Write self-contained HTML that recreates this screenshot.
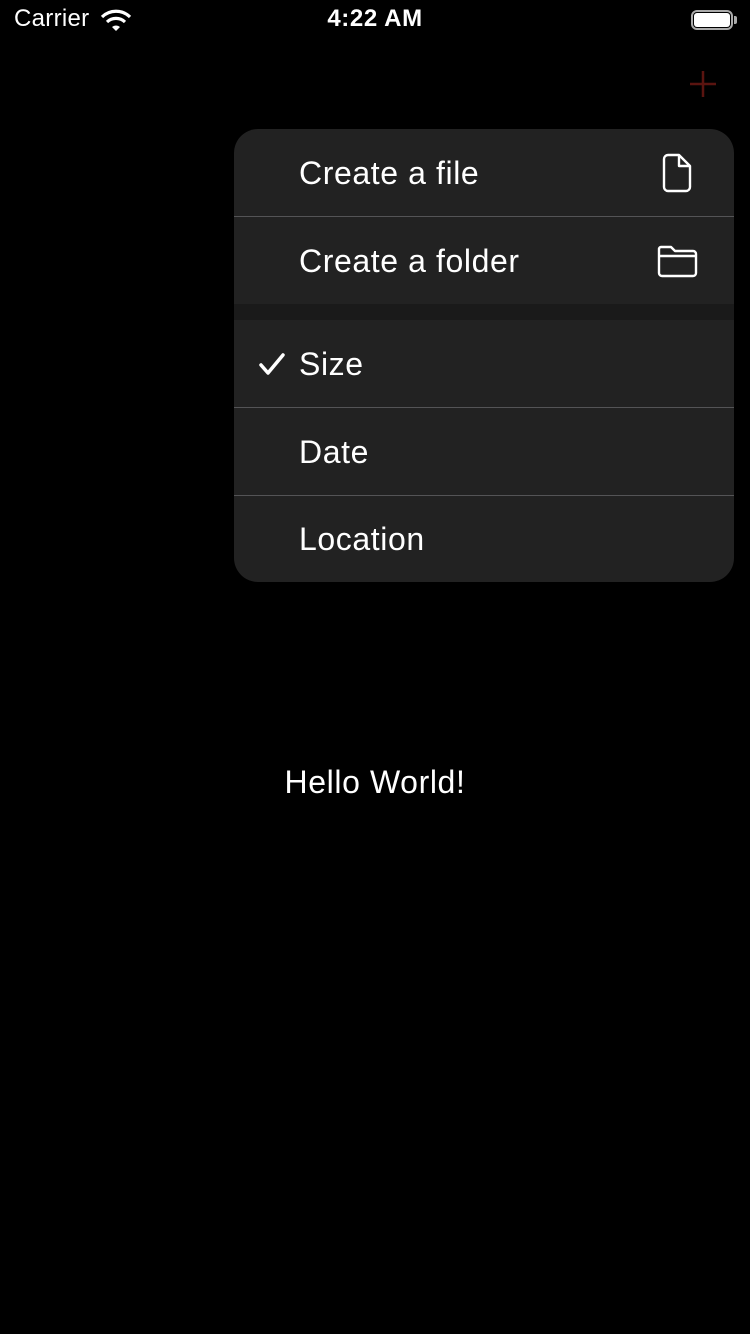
<!DOCTYPE html>
<html><head><style>
body{margin:0;width:750px;height:1334px;background:#000;position:relative;overflow:hidden;font-family:"Liberation Sans",sans-serif;color:#fff}
.abs{position:absolute}
.menu{left:234px;top:129px;width:500px;height:453px;border-radius:24px;overflow:hidden;background:#222}
.row{position:absolute;left:65px;width:430px;height:87px;font-size:32px;line-height:89px;letter-spacing:0.6px}
.sep{position:absolute;left:0;width:500px;height:1px;background:#545456}
</style></head><body>
<div class="abs" style="left:14px;top:5px;font-size:24px;letter-spacing:0.3px">Carrier</div>
<svg class="abs" style="left:100px;top:9px" width="32" height="24" viewBox="0 0 32 24"><path d="M2 8 A20 20 0 0 1 30 8" stroke="#fff" stroke-width="3.2" fill="none"/><path d="M7 13 A13 13 0 0 1 25 13" stroke="#fff" stroke-width="3.2" fill="none"/><path d="M12 18 L16 22 L20 18 A6 6 0 0 0 12 18Z" fill="#fff"/></svg>
<div class="abs" style="left:0;width:750px;top:5px;text-align:center;font-size:24px;font-weight:bold;letter-spacing:0.6px">4:22 AM</div>
<div class="abs" style="left:691px;top:10px;width:42px;height:20px;border:2px solid #aaa;border-radius:6px;box-sizing:border-box"></div>
<div class="abs" style="left:694px;top:13px;width:36px;height:14px;background:#fff;border-radius:3px"></div>
<div class="abs" style="left:734px;top:16px;width:3px;height:8px;background:#aaa;border-radius:0 2px 2px 0"></div>
<svg class="abs" style="left:688px;top:69px" width="30" height="30"><path d="M15 2V28M2 15H28" stroke="#5a1410" stroke-width="2.5"/></svg>
<div class="abs menu">
<div class="row" style="top:0">Create a file</div>
<div class="sep" style="top:87px"></div>
<div class="row" style="top:88px">Create a folder</div>
<div class="abs" style="left:0;top:175px;width:500px;height:16px;background:#1a1a1a"></div>
<div class="row" style="top:191px">Size</div>
<div class="sep" style="top:278px"></div>
<div class="row" style="top:279px">Date</div>
<div class="sep" style="top:366px"></div>
<div class="row" style="top:366px">Location</div>
<svg class="abs" style="left:24px;top:223px" width="28" height="26"><path d="M3 13L10 21L25 3" stroke="#fff" stroke-width="3.5" fill="none" stroke-linecap="round" stroke-linejoin="round"/></svg>
<svg class="abs" style="left:428px;top:24px" width="32" height="40" viewBox="0 0 32 40"><path d="M6 2H17L28 13V34A4 4 0 0 1 24 38H6A4 4 0 0 1 2 34V6A4 4 0 0 1 6 2Z M17 2V13H28" stroke="#fff" stroke-width="2.4" fill="none" stroke-linejoin="round"/></svg>
<svg class="abs" style="left:423px;top:114px" width="42" height="36" viewBox="0 0 42 36"><path d="M4 4H14L18 8H36A3 3 0 0 1 39 11V30A3 3 0 0 1 36 33H5A3 3 0 0 1 2 30V6A2 2 0 0 1 4 4Z M2 13H39" stroke="#fff" stroke-width="2.4" fill="none" stroke-linejoin="round"/></svg>
</div>
<div class="abs" style="left:0;width:750px;top:764px;text-align:center;font-size:32px;letter-spacing:0.6px">Hello World!</div>
</body></html>
